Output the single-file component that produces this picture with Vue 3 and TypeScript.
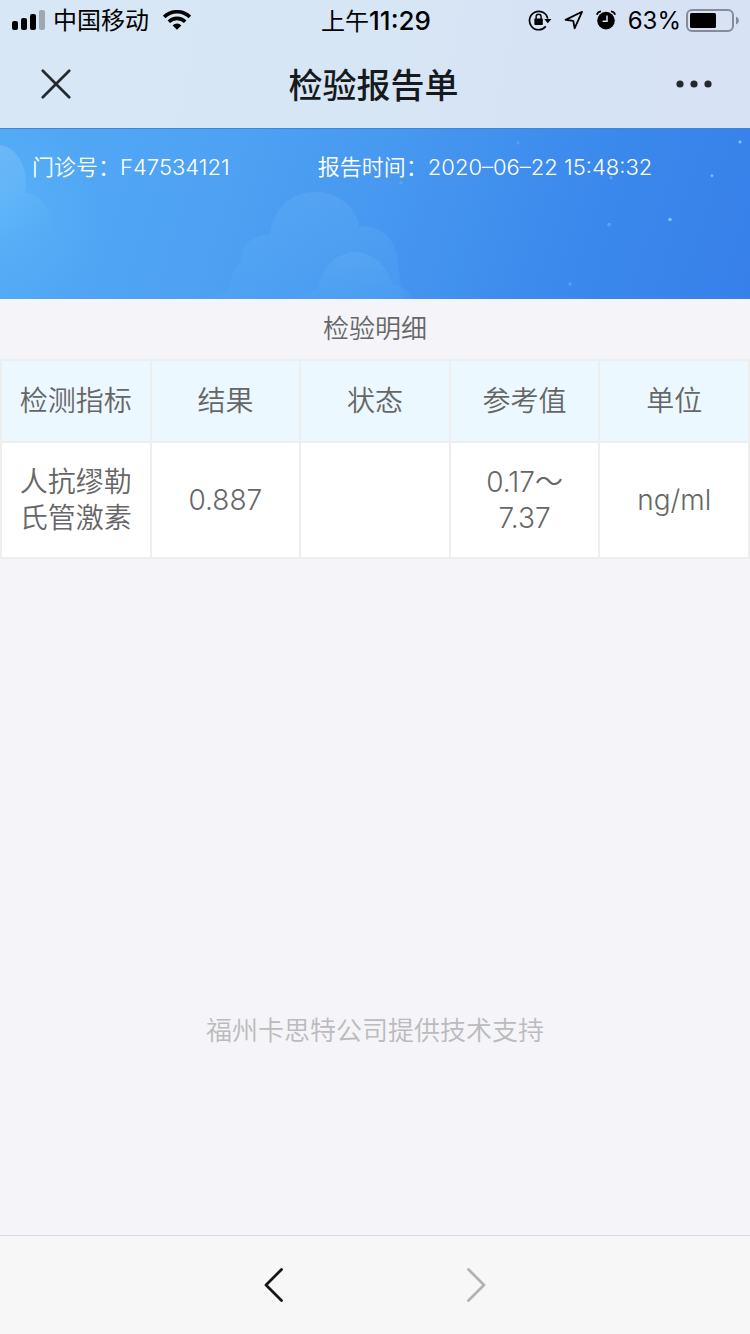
<script setup lang="ts">
interface ResultRow {
  name: string
  result: string
  status: string
  range: string
  unit: string
}

const columns: string[] = ['检测指标', '结果', '状态', '参考值', '单位']
const rows: ResultRow[] = [
  { name: '人抗缪勒氏管激素', result: '0.887', status: '', range: '0.17～7.37', unit: 'ng/ml' },
]
const stars = [
  { x: 740, y: 13, r: 1.5, o: 0.7 },
  { x: 712, y: 47, r: 1.5, o: 0.6 },
  { x: 670, y: 91, r: 1.7, o: 0.7 },
  { x: 609, y: 96, r: 1.7, o: 0.35 },
  { x: 611, y: 49, r: 1.7, o: 0.35 },
  { x: 570, y: 156, r: 1.7, o: 0.3 },
  { x: 518, y: 14, r: 1.7, o: 0.2 },
  { x: 401, y: 54, r: 1.7, o: 0.2 },
]
</script>

<template>
  <div class="page">
    <header class="top">
      <div class="status">
        <div class="status-left">
          <svg class="signal" viewBox="0 0 34 22" width="34" height="22" aria-hidden="true">
            <rect x="0" y="12" width="6" height="9" rx="2" />
            <rect x="9" y="9" width="6" height="12" rx="2" />
            <rect x="18" y="5" width="6" height="16" rx="2" />
            <rect x="27" y="1" width="6" height="20" rx="2" opacity="0.27" />
          </svg>
          <span class="carrier">中国移动</span>
          <svg class="wifi" viewBox="0 0 28 20" width="28" height="20" aria-hidden="true">
            <g fill="none" stroke="#000" stroke-width="3.6">
              <path d="M1.2 6.9 A18.4 18.4 0 0 1 26.8 6.9" />
              <path d="M5.8 11.7 A11.8 11.8 0 0 1 22.2 11.7" />
            </g>
            <path d="M9.6 15.4 A6.3 6.3 0 0 1 18.4 15.4 L14 19.8 Z" />
          </svg>
        </div>
        <span class="clock">上午<span class="digits">11:29</span></span>
        <div class="status-right">
          <svg viewBox="0 0 24 22" width="24" height="22" aria-hidden="true">
            <path d="M17.8 17.4 A9.2 9.2 0 1 1 19.7 9.6" fill="none" stroke="#000" stroke-width="1.7" />
            <path d="M16.2 10 H23.4 L19.8 14.2 Z" />
            <rect x="6.4" y="9.4" width="8.4" height="6.6" rx="0.8" />
            <path d="M8.1 10 V7.8 A2.5 2.5 0 0 1 13.1 7.8 V10" fill="none" stroke="#000" stroke-width="1.4" />
          </svg>
          <svg class="arrow" viewBox="0 0 20 20" width="20" height="20" aria-hidden="true">
            <path d="M18 1.8 L1.6 9.9 L9.3 10.8 L10.6 18.4 Z" fill="none" stroke="#000" stroke-width="1.8" stroke-linejoin="round" />
          </svg>
          <svg class="alarm" viewBox="0 0 20 20" width="20" height="20" aria-hidden="true">
            <circle cx="10" cy="10.6" r="8.8" />
            <path d="M0.9 4.8 Q1.6 1.7 5 1.3 M19.1 4.8 Q18.4 1.7 15 1.3" fill="none" stroke="#000" stroke-width="1.8" />
            <path d="M11 5.6 V11.3 H6.6" fill="none" stroke="#d7e5f5" stroke-width="1.5" />
          </svg>
          <span class="percent">63%</span>
          <svg class="battery" viewBox="0 0 54 24" width="54" height="24" aria-hidden="true">
            <rect x="1" y="2" width="46" height="21" rx="5" fill="none" stroke="#858c97" stroke-width="2" />
            <rect x="4" y="5" width="26" height="15" rx="1.5" />
            <path d="M50 8.5 Q53 10 53 12.5 Q53 15 50 16.5 Z" fill="#858c97" />
          </svg>
        </div>
      </div>
      <div class="nav">
        <button class="icon-btn" type="button" aria-label="关闭">
          <svg viewBox="0 0 30 30" width="30" height="30">
            <path d="M1.8 1.8 L28.2 28.2 M28.2 1.8 L1.8 28.2" fill="none" stroke="#24292d" stroke-width="2.7" stroke-linecap="round" />
          </svg>
        </button>
        <h1>检验报告单</h1>
        <button class="icon-btn" type="button" aria-label="更多">
          <svg viewBox="0 0 36 8" width="36" height="8" fill="#24292d">
            <circle cx="4" cy="4" r="3.6" />
            <circle cx="18" cy="4" r="3.6" />
            <circle cx="32" cy="4" r="3.6" />
          </svg>
        </button>
      </div>
    </header>

    <section class="banner">
      <svg class="sky" viewBox="0 0 750 171" preserveAspectRatio="none" aria-hidden="true">
        <defs>
          <linearGradient id="cloudLeft" gradientUnits="userSpaceOnUse" x1="0" y1="16" x2="30" y2="112">
            <stop offset="0" stop-color="#fff" stop-opacity="0.14" />
            <stop offset="0.45" stop-color="#dff1ff" stop-opacity="0.1" />
            <stop offset="1" stop-color="#8fd0ff" stop-opacity="0" />
          </linearGradient>
          <linearGradient id="cloudMid" x1="0" y1="0" x2="0" y2="1">
            <stop offset="0" stop-color="#7cc0fa" stop-opacity="0.2" />
            <stop offset="1" stop-color="#5cb2f8" stop-opacity="0.14" />
          </linearGradient>
          <radialGradient id="glow">
            <stop offset="0" stop-color="#5fc0fc" stop-opacity="0.4" />
            <stop offset="1" stop-color="#5fc0fc" stop-opacity="0" />
          </radialGradient>
        </defs>
        <ellipse cx="0" cy="90" rx="110" ry="100" fill="url(#glow)" />
        <path d="M0 16 C18 18 30 42 25 64 C40 66 50 78 52 96 V140 H0 Z" fill="url(#cloudLeft)" />
        <path d="M208 171 Q216 165 228 164 Q230 147 241 132 Q242 108 270 106 C272 82 290 63 316 63 C340 63 357 81 359 98 C380 96 396 110 398 134 L402 171 Z" fill="url(#cloudMid)" />
        <path d="M296 171 Q303 163 318 162 C321 140 336 124 355 124 C373 124 389 139 392 156 Q406 158 413 171 Z" fill="url(#cloudMid)" />
        <circle v-for="(s, i) in stars" :key="i" :cx="s.x" :cy="s.y" :r="s.r" fill="#a9dcff" :opacity="s.o" />
      </svg>
      <div class="info">
        <span>门诊号：F47534121</span>
        <span>报告时间：2020–06–22 15:48:32</span>
      </div>
    </section>

    <main>
      <table>
        <caption>检验明细</caption>
        <thead>
          <tr>
            <th v-for="c in columns" :key="c" scope="col">{{ c }}</th>
          </tr>
        </thead>
        <tbody>
          <tr v-for="r in rows" :key="r.name">
            <td>{{ r.name }}</td>
            <td>{{ r.result }}</td>
            <td>{{ r.status }}</td>
            <td>{{ r.range }}</td>
            <td>{{ r.unit }}</td>
          </tr>
        </tbody>
      </table>
      <p class="support">福州卡思特公司提供技术支持</p>
    </main>

    <nav class="toolbar" aria-label="页面导航">
      <button class="icon-btn" type="button" aria-label="后退">
        <svg viewBox="0 0 20 36" width="20" height="36">
          <path d="M17.5 2.5 L2 18 L17.5 33.5" fill="none" stroke="#161616" stroke-width="2.8" stroke-linecap="round" stroke-linejoin="round" />
        </svg>
      </button>
      <button class="icon-btn" type="button" aria-label="前进" disabled>
        <svg viewBox="0 0 20 36" width="20" height="36">
          <path d="M2.5 2.5 L18 18 L2.5 33.5" fill="none" stroke="#b2b2b2" stroke-width="2.8" stroke-linecap="round" stroke-linejoin="round" />
        </svg>
      </button>
    </nav>
  </div>
</template>

<style>
body {
  margin: 0;
  background: #f4f4f9;
}
</style>

<style scoped>
.page {
  display: flex;
  flex-direction: column;
  min-height: 100vh;
  background: #f4f4f9;
  color: #666;
  font-family: Inter, "Noto Sans CJK SC", sans-serif;
  font-weight: 350;
}

svg {
  display: block;
  flex: none;
}

.top {
  background: linear-gradient(100deg, #d7e7f5 0%, #d7e6f5 50%, #d6e3f5 70%, #d7e3f5 100%);
  color: #000;
}

.status {
  display: grid;
  grid-template-columns: 1fr auto 1fr;
  align-items: center;
  height: 40px;
  padding: 0 10px 0 12px;
  font-size: 24px;
  line-height: 36px;
}

.status-left,
.status-right {
  display: flex;
  align-items: center;
}

.status-right {
  justify-content: flex-end;
}

.carrier,
.clock,
.percent {
  padding-top: 2px;
  font-weight: 400;
}

.carrier {
  margin: 0 14px 0 7px;
}

.digits {
  font-size: 26px;
  font-weight: 500;
}

.arrow {
  margin: 0 12px;
}

.percent {
  margin: 0 5px 0 12px;
}

.nav {
  display: flex;
  justify-content: space-between;
  align-items: center;
  height: 88px;
  padding: 0 38px 0 41px;
}

h1 {
  margin: 0;
  padding-top: 4px;
  color: #171a1c;
  font-size: 34px;
  font-weight: 500;
  line-height: 48px;
}

.icon-btn {
  padding: 0;
  border: 0;
  background: none;
}

.banner {
  position: relative;
  height: 171px;
  box-sizing: border-box;
  border-top: 1px solid #3f86d8;
  background: linear-gradient(108deg, #52a9f5 0%, #4fa2f3 28%, #4798f0 50%, #3b89ec 76%, #3780ea 100%);
}

.sky {
  position: absolute;
  inset: 0;
  width: 100%;
  height: 100%;
}

.info {
  position: relative;
  display: grid;
  grid-template-columns: 5fr 7fr;
  padding: 22px 32px;
  color: #fff;
  font-size: 22px;
  line-height: 32px;
  white-space: nowrap;
}

main {
  flex: 1;
}

table {
  width: 100%;
  border-collapse: collapse;
  table-layout: fixed;
  font-size: 28px;
  line-height: 36px;
}

caption {
  font-size: 26px;
  line-height: 60px;
}

th,
td {
  padding: 21px 10px;
  border: 2px solid #eee;
  background: #fff;
  font-weight: inherit;
  text-align: center;
}

th {
  padding: 22px 10px;
  background: #ebf8ff;
}

.support {
  margin: 452px 0 0;
  color: #bbb;
  font-size: 26px;
  line-height: 40px;
  text-align: center;
}

.toolbar {
  display: flex;
  justify-content: center;
  align-items: center;
  gap: 182px;
  height: 98px;
  border-top: 1px solid #d9d9de;
  background: #f7f7f7;
}
</style>
